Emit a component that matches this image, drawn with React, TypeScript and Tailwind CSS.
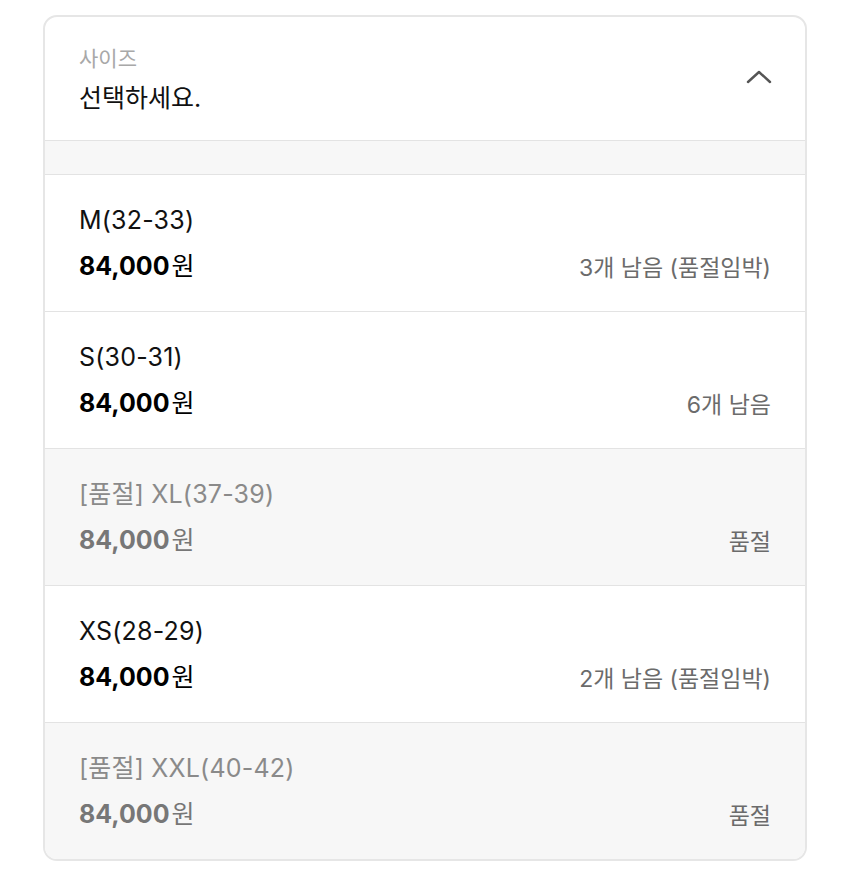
import React from "react";

type SizeOption = {
  label: string;
  price: string;
  stock: string;
  soldOut?: boolean;
};

const OPTIONS: SizeOption[] = [
  { label: "M(32-33)", price: "84,000", stock: "3개 남음 (품절임박)" },
  { label: "S(30-31)", price: "84,000", stock: "6개 남음" },
  { label: "[품절] XL(37-39)", price: "84,000", stock: "품절", soldOut: true },
  { label: "XS(28-29)", price: "84,000", stock: "2개 남음 (품절임박)" },
  { label: "[품절] XXL(40-42)", price: "84,000", stock: "품절", soldOut: true },
];

const FONT = { fontFamily: "Inter, 'Noto Sans CJK KR', sans-serif" };

function OptionRow({ option }: { option: SizeOption }) {
  return (
    <li
      className={`h-[137px] border-t border-[#e3e3e3] px-[34px] pt-[29px] ${
        option.soldOut ? "bg-[#f7f7f7]" : "bg-white"
      }`}
    >
      <div
        className={`text-[25px] leading-[32px] tracking-[0.2px] ${
          option.soldOut ? "text-[#8a8a8a]" : "text-[#111]"
        }`}
      >
        {option.label}
      </div>
      <div className="mt-[13px] flex items-center justify-between">
        <span
          className={`text-[25px] leading-[32px] ${
            option.soldOut ? "text-[#777]" : "text-black"
          }`}
        >
          <span className="font-bold">{option.price}</span>
          <span className="ml-[2px]">원</span>
        </span>
        <span className="mt-[5px] text-[23px] leading-[28px] text-[#6b6b6b]">
          {option.stock}
        </span>
      </div>
    </li>
  );
}

export default function App() {
  return (
    <div className="min-h-screen bg-white pt-[15px] pl-[43px]" style={FONT}>
      <div className="w-[764px] overflow-hidden rounded-[14px] border-2 border-[#e6e6e6] bg-white">
        {/* 선택 헤더 */}
        <div className="flex h-[123px] items-center justify-between pl-[34px] pr-[34px]">
          <div className="mt-[3px]">
            <div className="text-[21px] leading-[26px] text-[#a8a8a8]">사이즈</div>
            <div className="mt-[10px] text-[25px] leading-[32px] text-[#111]">선택하세요.</div>
          </div>
          <svg width="28" height="16" viewBox="0 0 28 16" className="-mt-[4px] -mr-[2px]">
            <polyline
              points="3,13 14,3 25,13"
              fill="none"
              stroke="#555"
              strokeWidth="2.4"
              strokeLinecap="round"
              strokeLinejoin="round"
            />
          </svg>
        </div>
        <div className="h-[34px] border-t border-[#e3e3e3] bg-[#f7f7f7]" />
        <ul>
          {OPTIONS.map((o) => (
            <OptionRow key={o.label} option={o} />
          ))}
        </ul>
      </div>
    </div>
  );
}
